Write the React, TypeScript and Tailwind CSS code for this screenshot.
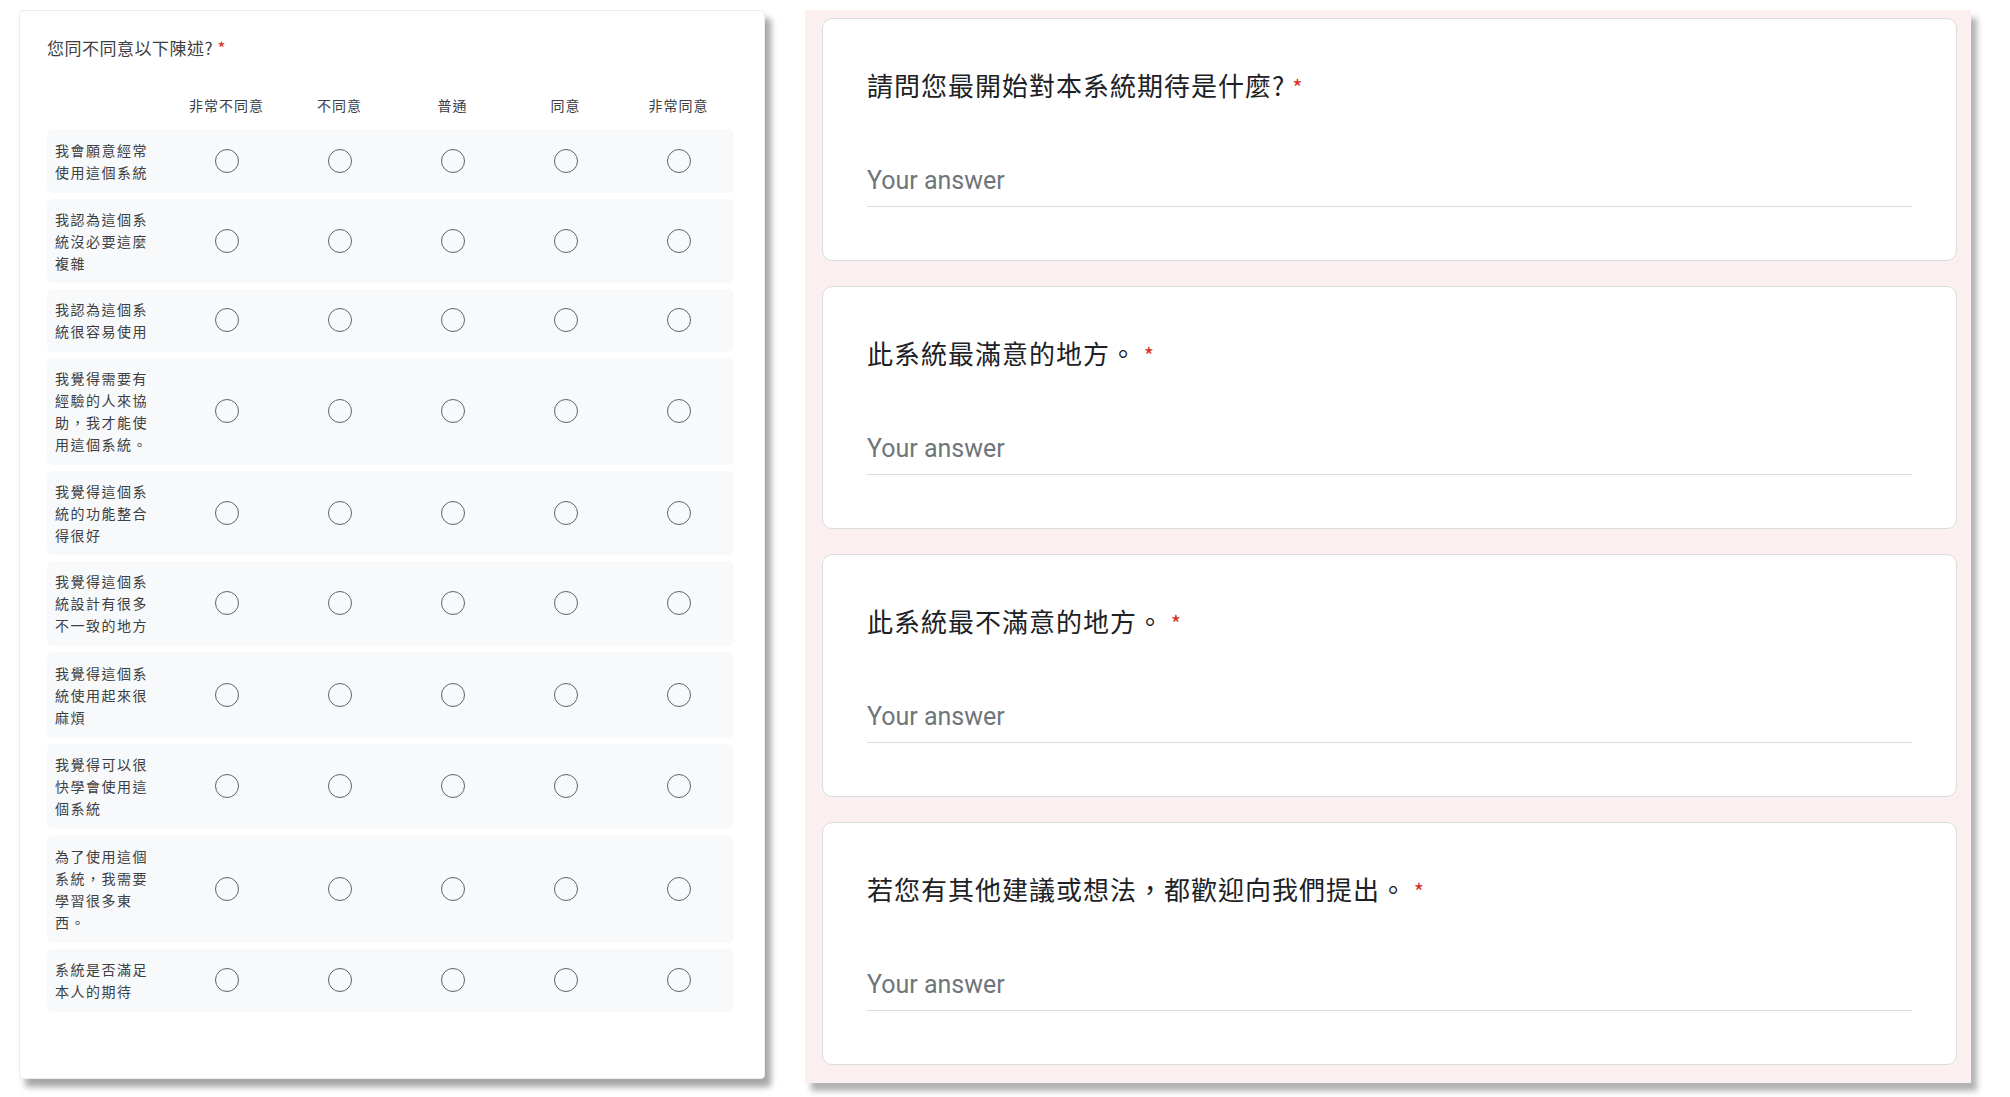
const font = { fontFamily: '"Noto Sans CJK TC", "Noto Sans", sans-serif' };

const cols = ["非常不同意", "不同意", "普通", "同意", "非常同意"];
const rows: { lines: string[]; h: string }[] = [
  { lines: ["我會願意經常", "使用這個系統"], h: "h-[64px]" },
  { lines: ["我認為這個系", "統沒必要這麼", "複雜"], h: "h-[84px]" },
  { lines: ["我認為這個系", "統很容易使用"], h: "h-[63px]" },
  { lines: ["我覺得需要有", "經驗的人來協", "助，我才能使", "用這個系統。"], h: "h-[107px]" },
  { lines: ["我覺得這個系", "統的功能整合", "得很好"], h: "h-[84px]" },
  { lines: ["我覺得這個系", "統設計有很多", "不一致的地方"], h: "h-[85px]" },
  { lines: ["我覺得這個系", "統使用起來很", "麻煩"], h: "h-[86px]" },
  { lines: ["我覺得可以很", "快學會使用這", "個系統"], h: "h-[85px]" },
  { lines: ["為了使用這個", "系統，我需要", "學習很多東", "西。"], h: "h-[108px]" },
  { lines: ["系統是否滿足", "本人的期待"], h: "h-[63px]" },
];

const questions = [
  "請問您最開始對本系統期待是什麼?",
  "此系統最滿意的地方。",
  "此系統最不滿意的地方。",
  "若您有其他建議或想法，都歡迎向我們提出。",
];

function Radio() {
  return (
    <div className="flex justify-center">
      <div className="w-[24px] h-[24px] rounded-full border-[1.5px] border-[#5f6368]" />
    </div>
  );
}

export default function App() {
  return (
    <div className="w-[2010px] h-[1097px] bg-white flex items-start pt-[10px]" style={font}>
      {/* grid question */}
      <div className="ml-[19px] w-[746px] h-[1069px] bg-white rounded-sm shadow-[6px_8px_6px_rgba(0,0,0,0.35)] border border-[#eee] pt-[24px] px-[27px]">
        <p className="text-[17px] text-[#3c4043] tracking-[0.5px]">
          您同不同意以下陳述? <span className="text-[#d93025]">*</span>
        </p>
        <div className="grid grid-cols-[123px_repeat(5,113px)] mt-[30px] h-[30px] items-center">
          <div />
          {cols.map((c) => (
            <p key={c} className="text-center text-[14px] tracking-[1px] text-[#3c4043]">
              {c}
            </p>
          ))}
        </div>
        <div className="flex flex-col gap-[6px] mt-[8px] w-[687px]">
          {rows.map((r, i) => (
            <div
              key={i}
              className={`grid grid-cols-[123px_repeat(5,113px)] items-center bg-[#f8f9fa] rounded-md ${r.h}`}
            >
              <div className="pl-[8px] text-[14px] leading-[22px] tracking-[1.5px] text-[#3c4043]">
                {r.lines.map((l) => (
                  <div key={l}>{l}</div>
                ))}
              </div>
              {cols.map((c) => (
                <Radio key={c} />
              ))}
            </div>
          ))}
        </div>
      </div>

      {/* text questions */}
      <div className="ml-[40px] w-[1166px] h-[1073px] bg-[#fcefef] shadow-[6px_8px_6px_rgba(0,0,0,0.3)] pt-[8px] pl-[17px] flex flex-col gap-[25px]">
        {questions.map((q) => (
          <div
            key={q}
            className="w-[1135px] h-[243px] bg-white rounded-[10px] border border-[#dadce0] pt-[46px] px-[44px]"
          >
            <p className="text-[26px] tracking-[1px] text-[#202124]">
              {q} <span className="text-[#d93025] text-[22px]">*</span>
            </p>
            <div className="mt-[58px] border-b border-[#dadce0] pb-[6px]">
              <p className="text-[25px] text-[#70757a]" style={{ fontFamily: "Roboto, sans-serif" }}>
                Your answer
              </p>
            </div>
          </div>
        ))}
      </div>
    </div>
  );
}
